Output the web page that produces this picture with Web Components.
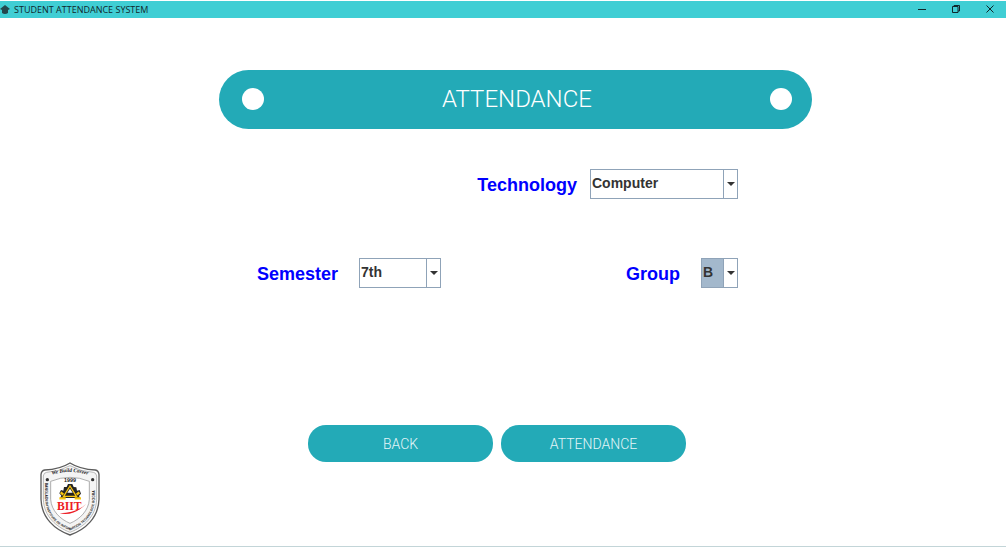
<!DOCTYPE html>
<html lang="en">
<head>
<meta charset="utf-8">
<meta name="viewport" content="width=device-width, initial-scale=1">
<title>Student Attendance System</title>
<style>
  body { margin: 0; background: #fff; font-family: "Liberation Sans", Arial, sans-serif; }
</style>
</head>
<body>
<attendance-app></attendance-app>
<script>
const define = (name, html, setup) => {
  const template = document.createElement('template');
  template.innerHTML = html;
  customElements.define(name, class extends HTMLElement {
    connectedCallback() {
      if (this.shadowRoot) return;
      this.attachShadow({ mode: 'open' }).append(template.content.cloneNode(true));
      if (setup) setup(this, this.shadowRoot);
    }
  });
};

define('window-bar', `
<style>
  :host { display: flex; align-items: center; height: 17px; margin-top: 1px; background: #40ced4; color: #10282c; font: 9px/17px "Open Sans", "Noto Sans", sans-serif; }
  .cap { width: 10px; height: 10px; margin-right: 4px; }
  h1 { margin: 0; font: inherit; flex: 1; white-space: nowrap; }
  button { width: 34px; height: 17px; padding: 0 0 2px; border: 0; background: none; color: inherit; display: grid; place-items: center; }
  .controls { display: flex; margin-right: -1px; }
  svg { display: block; }
</style>
<svg class="cap" viewBox="0 0 10 10" fill="#24484e"><path d="M0 4 5 0l5 4-2 1v3Q5 10 2 8V5z"/></svg>
<h1><slot></slot></h1>
<div class="controls">
  <button aria-label="Minimize"><svg width="8" height="8" viewBox="0 0 8 8"><path d="M0 4.500h8" stroke="currentColor"/></svg></button>
  <button aria-label="Restore"><svg width="8" height="8" viewBox="0 0 8 8" fill="none" stroke="currentColor"><path d="M.5 1.500h5.500v6h-5.500zM2 1.500v-1h5.500v5.500H6"/></svg></button>
  <button aria-label="Close"><svg width="8" height="8" viewBox="0 0 8 8"><path d="M.5.5l7 7M7.500.5l-7 7" stroke="currentColor"/></svg></button>
</div>`);

define('page-banner', `
<style>
  :host { display: flex; align-items: center; justify-content: space-between; box-sizing: border-box; height: 59px; padding: 0 20px 1px 23px; border-radius: 30px; background: #23aab7; color: #fff; }
  h2 { margin: 0; font: 300 24px/28px Roboto, sans-serif; }
  i { width: 22px; height: 22px; border-radius: 50%; background: #fff; }
</style>
<i></i><h2><slot></slot></h2><i></i>`);

define('combo-field', `
<style>
  :host { display: flex; align-items: center; gap: 21px; }
  :host([compact]) { gap: 13px; }
  label { padding-top: 2px; color: #00f; font: bold 18px/20px "Liberation Sans", Arial, sans-serif; }
  .box { display: flex; position: relative; width: var(--combo-width, 148px); }
  select { appearance: none; box-sizing: border-box; width: 100%; height: 30px; margin: 0; padding: 0 16px 2px 1px; border: 1px solid #8fa3b8; border-radius: 0; outline: 0; background: #fff; color: #333; font: bold 14px/16px "Liberation Sans", Arial, sans-serif; }
  :host([active]) select { background: #a3b8cc; }
  .arrow { position: absolute; inset: 1px 1px 1px auto; width: 13px; border-left: 1px solid #8fa3b8; background: #fff; display: grid; place-items: center; pointer-events: none; }
</style>
<label for="choice"></label>
<div class="box">
  <select id="choice"></select>
  <span class="arrow"><svg width="8" height="4" viewBox="0 0 8 4"><path d="M0 0h8L4 4z" fill="#333"/></svg></span>
</div>`, (host, root) => {
  root.querySelector('label').textContent = host.getAttribute('label');
  root.querySelector('select').add(new Option(host.getAttribute('value')));
});

define('pill-button', `
<style>
  :host { display: block; flex: 1; }
  button { display: block; width: 100%; height: 37px; padding: 0; border: 0; border-radius: 18px; background: #23aab7; color: #e4f5f7; font: 300 14px/16px Roboto, sans-serif; }
</style>
<button type="button"><slot></slot></button>`);

define('institute-logo', `
<style>
  :host { display: block; width: 60px; height: 74px; }
  svg { display: block; width: 100%; height: 100%; }
</style>
<svg viewBox="0 0 180 222" role="img" aria-label="BIIT crest">
  <defs>
    <path id="motto" d="M26 42Q90 18 154 42"/>
    <path id="ring" d="M16 62V112C18 164 52 190 90 205C128 190 162 164 164 112V50"/>
  </defs>
  <path d="M90 3Q120 22 166 24Q176 26 177 38V112C175 168 136 203 90 219C44 203 5 168 3 112V38Q4 26 14 24Q60 22 90 3Z" fill="#fff" stroke="#5c5c5c" stroke-width="4"/>
  <path d="M90 11Q122 29 160 31Q169 32 170 42V112C168 164 131 195 90 211C49 195 12 164 10 112V42Q11 32 20 31Q58 29 90 11Z" fill="#f4f4f4" stroke="#999" stroke-width="2"/>
  <path d="M32 58Q90 34 148 58V112C146 146 119 172 90 184C61 172 34 146 32 112Z" fill="#fff" stroke="#888" stroke-width="2"/>
  <g fill="#222">
    <text font-size="16" font-family="Liberation Serif, serif" font-style="italic" font-weight="bold" text-anchor="middle"><textPath href="#motto" startOffset="50%">We Build Career</textPath></text>
    <text font-size="10" font-family="Liberation Sans, sans-serif" font-weight="bold"><textPath href="#ring">BANGLADESH INSTITUTE OF INFORMATION TECHNOLOGY, BOGRA</textPath></text>
    <text x="90" y="60" font-size="16" font-family="Liberation Sans, sans-serif" font-weight="bold" text-anchor="middle">1999</text>
  </g>
  <g fill="#333"><circle cx="22" cy="53" r="5"/><circle cx="158" cy="53" r="5"/></g>
  <path d="M58 94 63 84 70 86 72 75 80 75 84 66H97L101 75 109 76 111 86 119 84 123 95 117 102 120 108H60L64 101Z" fill="#252525"/>
  <path d="M90 72 109 103H71Z" fill="#222" stroke="#f8c510" stroke-width="4"/>
  <path d="M82 92H98L90 80Z" fill="#fff"/>
  <path d="M58 109H77M104 109H123M62 91 70 98M118 91 110 98" stroke="#f8c510" stroke-width="7"/>
  <text x="88" y="145" font-family="Liberation Serif, serif" font-size="35" font-weight="bold" fill="#ed1c24" text-anchor="middle">BIIT</text>
  <path d="M59 154Q101 164 139 125Q114 151 59 154Z" fill="#ed1c24"/>
</svg>`);

define('attendance-app', `
<style>
  :host { display: flex; flex-direction: column; box-sizing: border-box; min-height: 100vh; border-bottom: 1px solid #c3d5d8; }
  main { box-sizing: border-box; width: 100%; max-width: 618px; margin: 0 auto; padding: 52px 0 0 25px; }
  form { display: grid; gap: 59px; padding: 40px 74px 0 38px; }
  .row { display: flex; justify-content: space-between; }
  .end { justify-content: flex-end; }
  .actions { display: flex; gap: 8px; padding: 137px 126px 0 89px; }
  .medium { --combo-width: 82px; }
  .small { --combo-width: 37px; }
  footer { margin-top: auto; padding: 0 40px 10px; }
</style>
<window-bar>STUDENT ATTENDANCE SYSTEM</window-bar>
<main>
  <page-banner>ATTENDANCE</page-banner>
  <form>
    <div class="row end"><combo-field compact label="Technology" value="Computer"></combo-field></div>
    <div class="row">
      <combo-field class="medium" label="Semester" value="7th"></combo-field>
      <combo-field class="small" active label="Group" value="B"></combo-field>
    </div>
  </form>
  <div class="actions"><pill-button>BACK</pill-button><pill-button>ATTENDANCE</pill-button></div>
</main>
<footer><institute-logo></institute-logo></footer>`);
</script>
</body>
</html>
